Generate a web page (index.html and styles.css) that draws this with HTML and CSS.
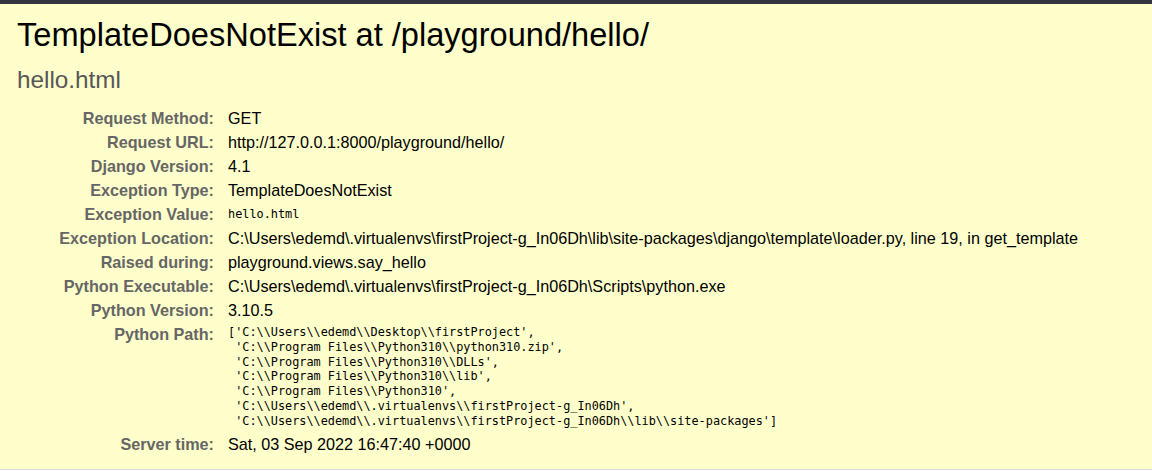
FILE: index.html
```html
<!DOCTYPE html>
<html>
<head>
<meta charset="utf-8">
<link rel="stylesheet" href="styles.css">
</head>
<body>
<div class="topbar"></div>
<div class="summary">
  <h1 class="title">TemplateDoesNotExist at /playground/hello/</h1>
  <pre class="exception-value">hello.html</pre>
  <table class="meta">
    <tbody>
      <tr><th>Request Method:</th><td>GET</td></tr>
      <tr><th>Request URL:</th><td>http://127.0.0.1:8000/playground/hello/</td></tr>
      <tr><th>Django Version:</th><td>4.1</td></tr>
      <tr><th>Exception Type:</th><td>TemplateDoesNotExist</td></tr>
      <tr><th>Exception Value:</th><td><pre class="mono">hello.html</pre></td></tr>
      <tr><th>Exception Location:</th><td><span class="fname">C:\Users\edemd\.virtualenvs\firstProject-g_In06Dh\lib\site-packages\django\template\loader.py</span>, line 19, in get_template</td></tr>
      <tr><th>Raised during:</th><td>playground.views.say_hello</td></tr>
      <tr><th>Python Executable:</th><td>C:\Users\edemd\.virtualenvs\firstProject-g_In06Dh\Scripts\python.exe</td></tr>
      <tr><th>Python Version:</th><td>3.10.5</td></tr>
      <tr><th>Python Path:</th><td><pre class="mono path">['C:\\Users\\edemd\\Desktop\\firstProject',
 'C:\\Program Files\\Python310\\python310.zip',
 'C:\\Program Files\\Python310\\DLLs',
 'C:\\Program Files\\Python310\\lib',
 'C:\\Program Files\\Python310',
 'C:\\Users\\edemd\\.virtualenvs\\firstProject-g_In06Dh',
 'C:\\Users\\edemd\\.virtualenvs\\firstProject-g_In06Dh\\lib\\site-packages']</pre></td></tr>
      <tr><th>Server time:</th><td>Sat, 03 Sep 2022 16:47:40 +0000</td></tr>
    </tbody>
  </table>
</div>
</body>
</html>
```

FILE: styles.css
```css
html, body {
  margin: 0;
  padding: 0;
}
body {
  background: #fff;
  color: #000;
  font-family: "Liberation Sans", Arial, sans-serif;
  font-size: 16.2px;
}
.topbar {
  height: 4px;
  background: #31333f;
}
.summary {
  background: #ffc;
  padding: 12px 20px 13px 17px;
  border-bottom: 1px solid #dddde3;
}
.title {
  margin: 0;
  font-size: 32.6px;
  font-weight: normal;
  line-height: 37px;
}
.exception-value {
  margin: 13px 0 12px 0;
  font-family: "Liberation Sans", Arial, sans-serif;
  font-size: 24.3px;
  line-height: 28px;
  color: #575757;
  white-space: pre-wrap;
}
.meta {
  border: none;
  border-collapse: collapse;
  background: transparent;
}
.meta th, .meta td {
  vertical-align: top;
  line-height: 18px;
  padding: 3px 0;
}
.meta th {
  width: 194px;
  padding-left: 3px;
  padding-right: 9px;
  text-align: right;
  color: #666;
  font-weight: bold;
  white-space: nowrap;
}
.meta td {
  padding-left: 5px;
  white-space: nowrap;
}
.mono {
  margin: 0;
  font-family: "DejaVu Sans Mono", "Liberation Mono", monospace;
  font-size: 11.85px;
  line-height: 18px;
  white-space: pre;
}
.mono.path {
  line-height: 14.8px;
}
```
